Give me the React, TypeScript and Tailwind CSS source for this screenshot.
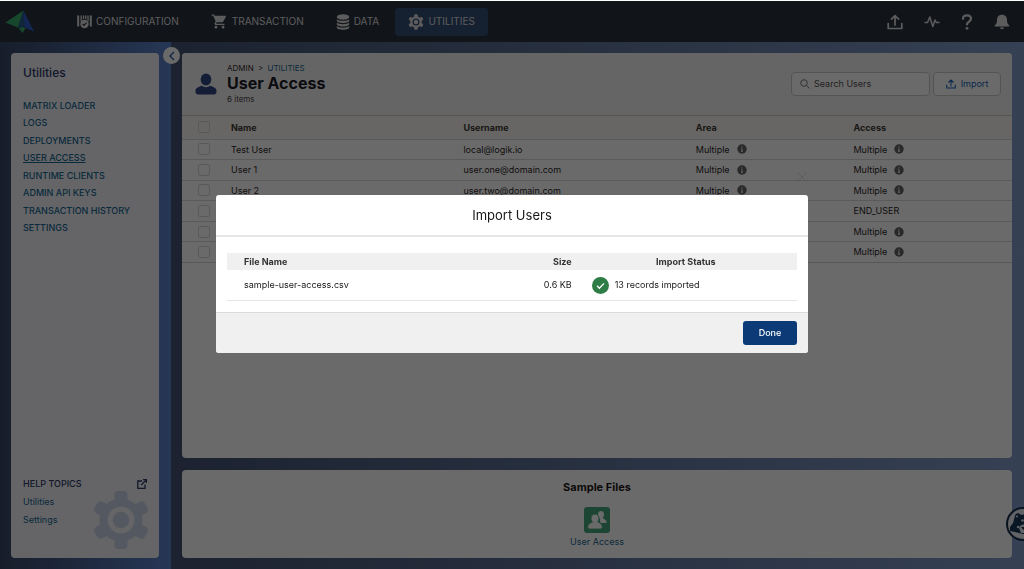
import { MdShoppingCart } from "react-icons/md"

const navItems = [
  { title: "CONFIGURATION", icon: <ConfigIcon /> },
  { title: "TRANSACTION", icon: <MdShoppingCart className="size-[17px]" /> },
  { title: "DATA", icon: <DataIcon /> },
]

const sideLinks = [
  "MATRIX LOADER",
  "LOGS",
  "DEPLOYMENTS",
  "USER ACCESS",
  "RUNTIME CLIENTS",
  "ADMIN API KEYS",
  "TRANSACTION HISTORY",
  "SETTINGS",
]

const users = [
  { name: "Test User", username: "local@logik.io", area: "Multiple", access: "Multiple" },
  { name: "User 1", username: "user.one@domain.com", area: "Multiple", access: "Multiple" },
  { name: "User 2", username: "user.two@domain.com", area: "Multiple", access: "Multiple" },
  { name: "", username: "", area: "", access: "END_USER" },
  { name: "", username: "", area: "", access: "Multiple" },
  { name: "", username: "", area: "", access: "Multiple" },
]

function ConfigIcon() {
  return (
    <svg viewBox="0 0 15 14" className="h-[14px] w-[15px]" fill="none" stroke="currentColor">
      <path d="M1.2 0.5v11M13.8 0.5v11" strokeWidth="2" />
      <path d="M4.2 0.5v6M6.5 0.5v3.5M8.7 0.5v3.5M11 0.5v6" strokeWidth="1.3" />
      <circle cx="7.5" cy="9" r="4.2" fill="currentColor" stroke="none" />
      <path d="M5.6 9l1.4 1.4 2.5-2.7" stroke="#1f2a36" strokeWidth="1.1" />
    </svg>
  )
}

function DataIcon() {
  return (
    <svg viewBox="0 0 14 16" className="h-4 w-[14px]" fill="currentColor">
      <ellipse cx="7" cy="3" rx="6.2" ry="2.7" />
      <path d="M0.8 5.2c1.2 2.2 11.2 2.2 12.4 0v1.6c0 3-12.4 3-12.4 0z" />
      <path d="M0.8 8.6c1.2 2.2 11.2 2.2 12.4 0v1.6c0 3-12.4 3-12.4 0z" />
      <path d="M0.8 12c1.2 2.2 11.2 2.2 12.4 0v1.4c0 3-12.4 3-12.4 0z" />
    </svg>
  )
}

function GearIcon({ className, hole }: { className: string; hole: string }) {
  return (
    <svg viewBox="-30 -30 60 60" className={className} fill="currentColor">
      {[0, 60, 120].map((angle) => (
        <rect key={angle} x="-6.5" y="-29" width="13" height="58" rx="4" transform={`rotate(${angle})`} />
      ))}
      <circle r="21.5" />
      <circle r="10.8" fill="none" stroke={hole} strokeWidth="5" />
    </svg>
  )
}

function UploadIcon({ className }: { className: string }) {
  return (
    <svg viewBox="0 0 16 16" className={className} fill="none" stroke="currentColor" strokeWidth="1.7" strokeLinejoin="round" strokeLinecap="round">
      <path d="M1.2 9.5v5h13.6v-5M8 11V1.8M4.4 5.2L8 1.6l3.6 3.6" />
    </svg>
  )
}

function Logo() {
  return (
    <svg viewBox="0 0 30 24" className="h-6 w-[30px]">
      <path d="M18.5 0.5L0.5 12.5l12.5 5z" fill="#2fa866" />
      <path d="M13 17.5l4.5 5.5 3-4.5-3-2z" fill="#2fa866" />
      <path d="M18.5 0.5L13 17.5l2.5 1 2.5-2.2 3 1.7z" fill="#1c5582" />
      <path d="M18.5 0.5L29 21.5l-9.5-4z" fill="#2357c4" />
    </svg>
  )
}

function UserIcon() {
  return (
    <svg viewBox="0 0 22 22" className="size-[22px]" fill="#24437d">
      <ellipse cx="11" cy="6.5" rx="5.3" ry="6" />
      <path d="M0.5 19v-1.600c0-2.400 4-3.700 6.200-4.600 2.600 1.900 6 1.900 8.600 0 2.200.9 6.200 2.200 6.200 4.600V19c0 1.600-1 2.500-2.500 2.500H3c-1.500 0-2.500-.9-2.500-2.500z" />
    </svg>
  )
}

function InfoIcon() {
  return (
    <svg viewBox="0 0 10 10" className="size-[10px]">
      <circle cx="5" cy="5" r="4.700" fill="#5c5c5c" />
      <path d="M5 2.300v1.200M4.300 4.600H5v2.600M4 7.200h2" stroke="#fff" strokeWidth="1" />
    </svg>
  )
}

function BearIcon() {
  return (
    <svg viewBox="0 0 34 34" className="size-[34px]">
      <circle cx="17" cy="17" r="16" fill="#e8eef4" stroke="#0c2846" strokeWidth="2" />
      <path d="M9 9c0-3 4-4 6-1 4-1 6-1 9 0 3-3 7 0 5 4l1 9-5 6-8 0-8-2-5-1 0-4 3-4z" fill="#0c3050" />
      <path d="M13 21c1-4 7-5 9 0l-1 5-6 0z" fill="#e8eef4" />
      <path d="M15 20h5l-2.500 3z" fill="#0c3050" />
      <circle cx="12" cy="20" r="1.200" fill="#e8eef4" />
      <circle cx="16.500" cy="13.500" r="1.300" fill="#e8eef4" />
      <circle cx="11" cy="9.500" r="1" fill="#e8eef4" />
    </svg>
  )
}

function Header() {
  return (
    <header className="flex h-[41px] items-center bg-[#1f2a36] pr-[14px] pl-[5px] text-[#dddddd]">
      <a href="#home" aria-label="Home">
        <Logo />
      </a>
      <nav className="ml-[42px] flex flex-1 items-center gap-8 text-[10px]">
        {navItems.map((item) => (
          <a key={item.title} href="#nav" className="flex items-center gap-1">
            {item.icon}
            {item.title}
          </a>
        ))}
        <a href="#utilities" className="-ml-4 flex h-7 w-[93px] items-center justify-center gap-1 rounded-sm bg-[#29466f]">
          <GearIcon className="size-4" hole="#29466f" />
          UTILITIES
        </a>
      </nav>
      <div className="flex items-center gap-[21px]">
        <button aria-label="Upload">
          <UploadIcon className="size-4" />
        </button>
        <button aria-label="Activity">
          <svg viewBox="0 0 16 12" className="h-3 w-4" fill="none" stroke="currentColor" strokeWidth="1.500" strokeLinejoin="round" strokeLinecap="round">
            <path d="M1 6.500h2.600L5.800 1l3 9.500L11 4l1.300 2.500H15" />
          </svg>
        </button>
        <button aria-label="Help">
          <svg viewBox="0 0 12 16" className="h-4 w-3" fill="none" stroke="currentColor" strokeWidth="2.200" strokeLinecap="round">
            <path d="M2 4.800c0-4.600 8-4.600 8 0 0 2.800-4 2.700-4 5.700" />
            <circle cx="6" cy="14.300" r="1.400" fill="currentColor" stroke="none" />
          </svg>
        </button>
        <button aria-label="Notifications">
          <svg viewBox="0 0 16 16" className="size-4" fill="currentColor">
            <path d="M8 .8c3.200 0 5 2.200 5 5 0 3.500.7 4.400 2 5.200.7.500.4 1.500-.5 1.500h-13c-.9 0-1.200-1-.5-1.500 1.300-.8 2-1.700 2-5.200 0-2.800 1.800-5 5-5z" />
            <path d="M6 13.500h4c-.2 2.200-3.800 2.200-4 0z" />
          </svg>
        </button>
      </div>
    </header>
  )
}

function Sidebar() {
  return (
    <aside className="relative flex w-[171px] shrink-0 bg-linear-to-r from-[#2e4060] to-[#5380cc] pt-[11px] pr-3 pb-[11px] pl-[11px]">
      <div className="flex flex-1 flex-col rounded-sm bg-[#f0f3fa] px-3 pt-3">
        <h2 className="text-[12px] leading-4 font-medium text-[#233060]">Utilities</h2>
        <ul className="mt-4 flex h-[139px] flex-col justify-between text-[9px] leading-[17px] font-medium text-[#0b5f8a]">
          {sideLinks.map((link) => (
            <li key={link} className="whitespace-nowrap">
              <a href="#link" className={link === "USER ACCESS" ? "underline" : ""}>
                {link}
              </a>
            </li>
          ))}
        </ul>
        <div className="relative mt-auto h-[83px] text-[9px] leading-[18px] text-[#0b5f8a]">
          <GearIcon className="absolute -right-1 bottom-2 size-[60px] text-[#c6d2e6]" hole="#f0f3fa" />
          <div className="relative flex items-center justify-between font-medium text-[#233060]">
            HELP TOPICS
            <a href="#help" aria-label="Open help">
              <svg viewBox="0 0 10 10" className="size-[10px]" fill="none" stroke="currentColor" strokeWidth="1.300">
                <path d="M5 2H.8v7.300H8V5.500M6 .7h3.400v3.400M9.200.9L4.200 6" />
              </svg>
            </a>
          </div>
          <a href="#utilities" className="relative block">Utilities</a>
          <a href="#settings" className="relative block">Settings</a>
        </div>
      </div>
      <button aria-label="Collapse" className="absolute top-[5px] -right-[9px] z-10 flex size-[17px] items-center justify-center rounded-full bg-white text-[#1f4f9c]">
        <svg viewBox="0 0 10 10" className="size-[10px]" fill="none" stroke="currentColor" strokeWidth="1.400">
          <path d="M7 1L3 5l4 4" />
        </svg>
      </button>
    </aside>
  )
}

function InfoCell({ text }: { text: string }) {
  return (
    <td className="px-[10px]">
      <div className="flex items-center gap-[7px]">
        {text}
        {text === "Multiple" && <InfoIcon />}
      </div>
    </td>
  )
}

function UsersPanel() {
  return (
    <section className="flex-1 overflow-hidden rounded-sm bg-white">
      <div className="flex h-[63px] items-center border-b border-[#c9c9c9] bg-[#f3f3f3] pr-[11px] pl-[13px]">
        <UserIcon />
        <div className="ml-[10px] flex-1">
          <p className="text-[8px] leading-[10px] text-[#181818]">
            ADMIN <span className="mx-[2px]">&gt;</span>{" "}
            <a href="#utilities" className="text-[#0b5f8a]">UTILITIES</a>
          </p>
          <h1 className="text-[16px] leading-5 font-bold text-[#10131c]">User Access</h1>
          <p className="text-[8px] leading-3 text-[#3e3e3c]">6 items</p>
        </div>
        <div className="flex gap-[3px]">
          <label className="flex h-6 w-[139px] items-center gap-1 rounded-sm border border-[#c9c9c9] bg-white px-2">
            <svg viewBox="0 0 10 10" className="size-[10px] shrink-0" fill="none" stroke="#747474" strokeWidth="1">
              <circle cx="4" cy="4" r="3.300" />
              <path d="M6.500 6.500L9.500 9.500" />
            </svg>
            <input aria-label="Search Users" placeholder="Search Users" className="w-full min-w-0 text-[9px] outline-none placeholder:text-[#4a4a4a]" />
          </label>
          <button className="flex h-6 w-[68px] items-center justify-center gap-[5px] rounded-sm border border-[#c9c9c9] bg-white text-[9px] text-[#0a5bb8]">
            <UploadIcon className="size-[10px]" />
            Import
          </button>
        </div>
      </div>
      <table className="h-[147px] w-full table-fixed border-b border-[#d0d0d0] text-left text-[9px] text-[#181818]">
        <colgroup>
          <col className="w-[39px]" />
          <col className="w-[28%]" />
          <col className="w-[28%]" />
          <col className="w-[19%]" />
          <col />
        </colgroup>
        <thead>
          <tr className="h-[23px] bg-[#f5f5ef] text-[#33332f]">
            <th className="pl-4">
              <input type="checkbox" aria-label="Select all" className="block size-3 appearance-none rounded-xs border border-[#d4d4d4]" />
            </th>
            <th className="px-[10px]">Name</th>
            <th className="px-[10px]">Username</th>
            <th className="px-[10px]">Area</th>
            <th className="px-[10px]">Access</th>
          </tr>
        </thead>
        <tbody>
          {users.map((user, index) => (
            <tr key={index} className="h-5 border-t border-[#d6d6d6]">
              <td className="pl-4">
                <input type="checkbox" aria-label="Select row" className="block size-3 appearance-none rounded-xs border border-[#d4d4d4]" />
              </td>
              <td className="px-[10px]">{user.name}</td>
              <td className="px-[10px]">{user.username}</td>
              <InfoCell text={user.area} />
              <InfoCell text={user.access} />
            </tr>
          ))}
        </tbody>
      </table>
    </section>
  )
}

function SampleFiles() {
  return (
    <section className="flex flex-col items-center rounded-sm bg-white pt-[9px] pb-[7px]">
      <h2 className="text-[11px] leading-4 font-bold text-[#101010]">Sample Files</h2>
      <a href="#sample" className="mt-3 flex flex-col items-center text-[9px] leading-[18px] text-[#0b5f8a]">
        <svg viewBox="0 0 26 26" className="size-[26px]">
          <rect width="26" height="26" rx="3" fill="#3ba577" />
          <g fill="#fff">
            <ellipse cx="17" cy="7.500" rx="3" ry="3.500" />
            <path d="M15.500 10h3c0 2 4 2.500 4 4.500V16h-6z" />
          </g>
          <g fill="#fff" stroke="#3ba577" strokeWidth="0.800">
            <path d="M9 13h4.500c0 3 4.800 3.200 4.800 6.500 0 1.500-.5 2.500-1.500 2.500h-11c-1.500 0-2-1-2-2.500C3.800 16.200 9 16 9 13z" />
            <ellipse cx="11" cy="11.500" rx="4" ry="4.500" />
          </g>
          <path d="M9.500 13h3.200v4H9.500z" fill="#fff" />
        </svg>
        User Access
      </a>
    </section>
  )
}

function ImportDialog() {
  return (
    <div className="fixed inset-x-0 top-px bottom-0 z-20 flex items-center justify-center bg-[#080707]/60 pb-[22px]">
      <div role="dialog" aria-labelledby="import-title" className="relative w-full max-w-[592px] text-[#181818]">
        <button aria-label="Close" className="absolute -top-6 right-0 text-[#5e5e5e]">
          <svg viewBox="0 0 12 12" className="size-3" fill="none" stroke="currentColor">
            <path d="M1 1l10 10M11 1L1 11" />
          </svg>
        </button>
        <div className="overflow-hidden rounded-[3px] bg-white">
          <h2 id="import-title" className="border-b-2 border-[#e5e5e5] py-[10px] text-center text-[13px] leading-5">
            Import Users
          </h2>
          <div className="px-[11px] pt-4 pb-[11px]">
            <table className="w-full table-fixed border-b border-[#e5e5e5] text-[9px]">
              <colgroup>
                <col />
                <col className="w-[15%]" />
                <col className="w-[39%]" />
              </colgroup>
              <thead>
                <tr className="h-[17px] bg-[#f0f0f0] text-[#333333]">
                  <th className="pl-[17px] text-left">File Name</th>
                  <th className="pr-[3px] text-right">Size</th>
                  <th>Import Status</th>
                </tr>
              </thead>
              <tbody>
                <tr className="h-[30px]">
                  <td className="pl-[17px]">sample-user-access.csv</td>
                  <td className="pr-[3px] text-right">0.6 KB</td>
                  <td className="pl-[17px]">
                    <div className="flex items-center gap-[6px]">
                      <svg viewBox="0 0 17 17" className="size-[17px]">
                        <circle cx="8.500" cy="8.500" r="8.500" fill="#2e7d46" />
                        <path d="M5 8.800l2.400 2.400 4.600-4.800" fill="none" stroke="#fff" strokeWidth="1.300" />
                      </svg>
                      13 records imported
                    </div>
                  </td>
                </tr>
              </tbody>
            </table>
          </div>
          <div className="flex justify-end border-t border-[#dcdcdc] bg-[#f0f0f0] px-[11px] py-2">
            <button className="h-6 w-[54px] rounded-[3px] bg-[#0b3a77] text-[9px] font-medium text-white">Done</button>
          </div>
        </div>
      </div>
    </div>
  )
}

export default function App() {
  return (
    <div className="flex h-screen flex-col overflow-hidden border-t border-white font-['Inter','Liberation_Sans',sans-serif]">
      <Header />
      <div className="flex flex-1">
        <Sidebar />
        <main className="flex flex-1 flex-col gap-3 bg-linear-to-r from-[#3a4c6c] to-[#7a98c8] py-[11px] pr-3 pl-[11px]">
          <UsersPanel />
          <SampleFiles />
        </main>
      </div>
      <button aria-label="Assistant" className="fixed -right-4 bottom-7 z-10">
        <BearIcon />
      </button>
      <ImportDialog />
    </div>
  )
}
